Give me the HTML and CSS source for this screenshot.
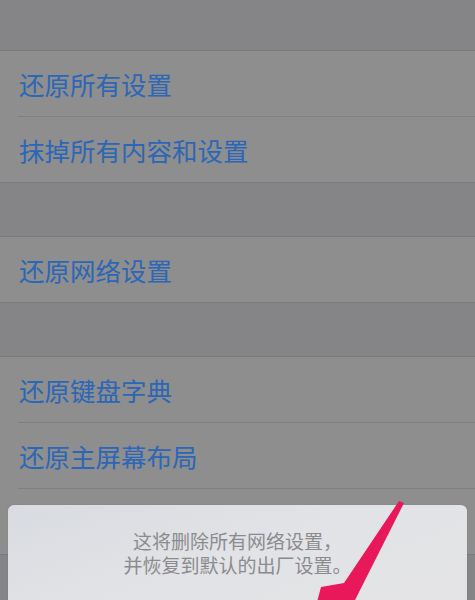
FILE: index.html
```html
<!DOCTYPE html>
<html lang="zh-CN">
<head>
<meta charset="utf-8">
<title>还原</title>
<link rel="stylesheet" href="styles.css">
</head>
<body>
<div class="screen">
  <div class="list">
    <div class="gap gap-top"></div>
    <div class="group">
      <div class="cell"><span class="label">还原所有设置</span></div>
      <div class="cell"><span class="label">抹掉所有内容和设置</span></div>
    </div>
    <div class="gap"></div>
    <div class="group">
      <div class="cell"><span class="label">还原网络设置</span></div>
    </div>
    <div class="gap"></div>
    <div class="group">
      <div class="cell"><span class="label">还原键盘字典</span></div>
      <div class="cell"><span class="label">还原主屏幕布局</span></div>
      <div class="cell"></div>
    </div>
    <div class="gap"></div>
  </div>

  <div class="sheet">
    <p class="message">这将删除所有网络设置，<br>并恢复到默认的出厂设置。</p>
  </div>

  <svg class="arrow" viewBox="0 0 475 600" width="475" height="600" aria-hidden="true">
    <polygon points="399,501 404,503 352,606 316,606 321,587 344,583" fill="#e9185b"/>
  </svg>
</div>
</body>
</html>
```

FILE: styles.css
```css
html, body {
  margin: 0;
  padding: 0;
}

body {
  font-family: "Noto Sans CJK SC", "Noto Sans", sans-serif;
  background: #858588;
}

.screen {
  position: relative;
  width: 475px;
  height: 600px;
  overflow: hidden;
  background: #858588;
}

.list {
  display: flex;
  flex-direction: column;
}

.gap {
  height: 53px;
  background: #858588;
}

.gap-top {
  height: 50px;
}

.group {
  background: #8e8e8f;
  border-top: 1px solid #7b7b7e;
  border-bottom: 1px solid #7b7b7e;
  padding-left: 18px;
}

.cell {
  height: 65px;
  display: flex;
  align-items: center;
  border-bottom: 1px solid #7e7e81;
}

.cell:last-child {
  border-bottom: none;
}

.label {
  padding-left: 1px;
  font-size: 25.5px;
  line-height: 30px;
  color: #2c66b6;
}

.sheet {
  position: absolute;
  left: 8px;
  top: 505px;
  width: 459px;
  height: 130px;
  border-radius: 6px;
  background: linear-gradient(160deg, #d8dbe1 0%, #e2e3e6 45%, #e4e4e6 100%);
  box-shadow: 0 0 1px rgba(0, 0, 0, 0.25);
}

.message {
  margin: 0;
  padding-top: 24px;
  text-align: center;
  font-size: 19px;
  line-height: 24px;
  color: #8b8b8d;
}

.arrow {
  position: absolute;
  left: 0;
  top: 0;
}
```
